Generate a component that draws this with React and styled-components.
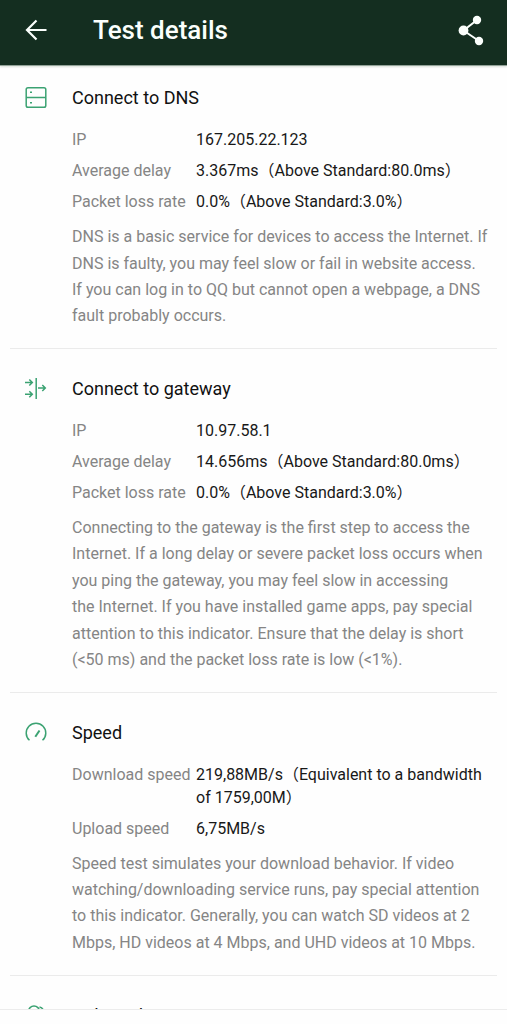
import React from 'react'
import styled, { createGlobalStyle } from 'styled-components'

const GlobalStyles = createGlobalStyle`
    * { box-sizing: border-box; }

    body {
        margin: 0;
        background-color: #fefefe;
        font-family: Roboto, 'Noto Sans CJK SC', sans-serif;
        overflow: hidden;
    }
    h1, h2, p, dl, dt, dd { margin: 0; }
`

// CONTAINERS
const Screen = styled.div`
    display: flex;
    flex-direction: column;
    height: 1024px;
    padding-bottom: 14px;
`
const Header = styled.header`
    display: flex;
    flex: none;
    align-items: center;
    height: 66px;
    padding: 0 20px 6px 24px;
    color: #fbfffc;
    background-color: #142e20;
    border-bottom: 1px solid #92a298;
    box-shadow: 0 1px 2px #d9ddd8;
`
const Content = styled.main`
    flex: 1;
    min-height: 0;
    overflow: hidden;
    border-bottom: 1px solid #ececec;
`
const Section = styled.section`
    display: grid;
    grid-template-columns: 61px 1fr;
    margin: 0 10px;
    padding: ${p => p.first ? '20px' : '28px'} 0 18.4px 1px;
    border-bottom: 1px solid #ebebeb;
`
const IconCell = styled.div`
    padding-left: 13px;

    > svg { display: block; }
`
const Rows = styled.dl`
    display: grid;
    grid-template-columns: 124px 1fr;
    row-gap: 8px;
    margin-top: 18px;
    font-size: 16px;
    line-height: 23px;
    white-space: pre;
`

// TEXT
const PageTitle = styled.h1`
    flex: 1;
    margin-left: 45px;
    font-size: 26px;
    font-weight: 500;
    line-height: 32px;
`
const SectionTitle = styled.h2`
    font-size: 18px;
    font-weight: 400;
    line-height: 24px;
    color: #111;
`
const Label = styled.dt`
    color: #858585;
`
const Value = styled.dd`
    color: #181818;
`
const Description = styled.p`
    margin-top: 11.2px;
    font-size: 16px;
    line-height: 26.35px;
    color: #858585;
    white-space: pre;
`

// ICONS
const BackIcon = () => (
    <svg width="24" height="24" viewBox="0 0 24 24" fill="none" stroke="currentColor" strokeWidth="2.2">
        <path d="M22.5 12H3M12.5 2.5L3 12l9.5 9.5" />
    </svg>
)
const ShareIcon = () => (
    <svg width="30" height="32" viewBox="0 0 30 32" fill="currentColor">
        <path d="M20 6L6.500 16.500L22 27" fill="none" stroke="currentColor" strokeWidth="2" />
        <circle cx="20" cy="6" r="4.200" />
        <circle cx="6.500" cy="16.500" r="4.900" />
        <circle cx="22" cy="27" r="4.200" />
    </svg>
)
const GreenIcon = styled.svg.attrs({ width: 24, height: 24, viewBox: '0 0 24 24' })`
    fill: none;
    stroke: #3ba272;
    stroke-width: 1.5;
`
const DnsIcon = () => (
    <GreenIcon>
        <rect x="2.200" y="1.700" width="19.600" height="19.600" rx="1.800" />
        <path d="M2.200 11.500h19.600M6 6.200h2M6 16.800h2" />
    </GreenIcon>
)
const GatewayIcon = () => (
    <GreenIcon>
        <path d="M12.200 1v21M1 5.500h7M5.300 2.500l3 3-3 3M1 17.200h7M5.300 14.200l3 3-3 3M14 11h7.300M18.300 8l3 3-3 3" />
    </GreenIcon>
)
const SpeedIcon = () => (
    <GreenIcon>
        <path d="M5.500 19.300A9.800 9.800 0 1 1 18.500 19.300" />
        <path d="M11.300 15.800l4.200-6.300" strokeWidth="2" />
    </GreenIcon>
)
const ClientsIcon = () => (
    <GreenIcon>
        <circle cx="10" cy="7.500" r="5.500" />
        <path d="M15.500 3a5 5 0 0 1 1 9.500M1.500 22c0-5 4-8 8.500-8s8.500 3 8.500 8" />
    </GreenIcon>
)

const sections = [
    {
        title: 'Connect to DNS',
        icon: <DnsIcon />,
        rows: [
            ['IP', '167.205.22.123'],
            ['Average delay', '3.367ms（Above Standard:80.0ms）'],
            ['Packet loss rate', '0.0%（Above Standard:3.0%）'],
        ],
        text: `DNS is a basic service for devices to access the Internet. If
DNS is faulty, you may feel slow or fail in website access.
If you can log in to QQ but cannot open a webpage, a DNS
fault probably occurs.`,
    },
    {
        title: 'Connect to gateway',
        icon: <GatewayIcon />,
        rows: [
            ['IP', '10.97.58.1'],
            ['Average delay', '14.656ms（Above Standard:80.0ms）'],
            ['Packet loss rate', '0.0%（Above Standard:3.0%）'],
        ],
        text: `Connecting to the gateway is the first step to access the
Internet. If a long delay or severe packet loss occurs when
you ping the gateway, you may feel slow in accessing
the Internet. If you have installed game apps, pay special
attention to this indicator. Ensure that the delay is short
(<50 ms) and the packet loss rate is low (<1%).`,
    },
    {
        title: 'Speed',
        icon: <SpeedIcon />,
        rows: [
            ['Download speed', '219,88MB/s（Equivalent to a bandwidth\nof 1759,00M）'],
            ['Upload speed', '6,75MB/s'],
        ],
        text: `Speed test simulates your download behavior. If video
watching/downloading service runs, pay special attention
to this indicator. Generally, you can watch SD videos at 2
Mbps, HD videos at 4 Mbps, and UHD videos at 10 Mbps.`,
    },
    { title: 'Online Clients', icon: <ClientsIcon />, rows: [] },
]

const App = () => (
    <>
        <GlobalStyles />
        <Screen>
            <Header>
                <BackIcon />
                <PageTitle>Test details</PageTitle>
                <ShareIcon />
            </Header>
            <Content>
                {sections.map((section, i) => (
                    <Section key={section.title} first={i === 0 ? 1 : undefined}>
                        <IconCell>{section.icon}</IconCell>
                        <div>
                            <SectionTitle>{section.title}</SectionTitle>
                            <Rows>
                                {section.rows.map(([label, value]) => (
                                    <React.Fragment key={label}>
                                        <Label>{label}</Label>
                                        <Value>{value}</Value>
                                    </React.Fragment>
                                ))}
                            </Rows>
                            {section.text && <Description>{section.text}</Description>}
                        </div>
                    </Section>
                ))}
            </Content>
        </Screen>
    </>
)

export default App
